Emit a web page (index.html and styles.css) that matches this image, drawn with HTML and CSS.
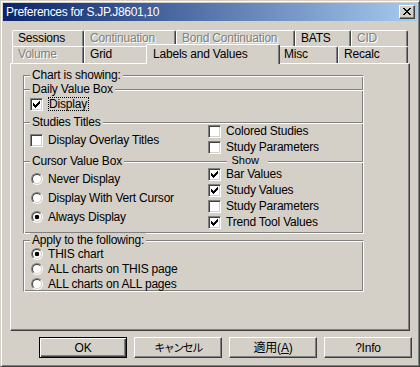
FILE: index.html
```html
<!DOCTYPE html>
<html>
<head>
    <title>Preferences for S.JP.J8601,10</title>
    <link rel="stylesheet" href="styles.css">
</head>
<body>
<div class="window">
    <div class="titlebar">
        <span class="title">Preferences for S.JP.J8601,10</span>
        <span class="close">
            <svg width="8" height="7" viewBox="0 0 8 7" shape-rendering="crispEdges"><path fill="#000" d="M0 0h2v1H0z M6 0h2v1H6z M1 1h2v1H1z M5 1h2v1H5z M2 2h4v1H2z M3 3h2v1H3z M2 4h4v1H2z M1 5h2v1H1z M5 5h2v1H5z M0 6h2v1H0z M6 6h2v1H6z"/></svg>
        </span>
    </div>

    <div class="tabs">
        <div class="tabrow back">
            <div class="tab t-sessions">Sessions</div>
            <div class="tab t-cont off">Continuation</div>
            <div class="tab t-bond off">Bond Continuation</div>
            <div class="tab t-bats">BATS</div>
            <div class="tab t-cid off">CID</div>
        </div>
        <div class="tabrow front">
            <div class="tab t-volume off">Volume</div>
            <div class="tab t-grid">Grid</div>
            <div class="tab t-labels current">Labels and Values</div>
            <div class="tab t-misc">Misc</div>
            <div class="tab t-recalc">Recalc</div>
        </div>
    </div>

    <div class="panel">
        <div class="group chart">
            <div class="group-title">Chart is showing:</div>

            <div class="hdr hdr-daily">
                <span class="line tick"></span><span class="hdr-label">Daily Value Box</span><span class="line grow"></span>
            </div>
            <div class="opt opt-display">
                <span class="cb"><svg width="7" height="7" viewBox="0 0 7 7" shape-rendering="crispEdges"><path fill="#000" d="M0 2h1v3H0z M1 3h1v3H1z M2 4h1v3H2z M3 3h1v3H3z M4 2h1v3H4z M5 1h1v3H5z M6 0h1v3H6z"/></svg></span>
                <span class="txt focus">Display</span>
            </div>

            <div class="hdr hdr-studies">
                <span class="line tick"></span><span class="hdr-label">Studies Titles</span><span class="line grow"></span>
            </div>
            <div class="cols studies">
                <div class="col left">
                    <div class="opt"><span class="cb"></span><span class="txt">Display Overlay Titles</span></div>
                </div>
                <div class="col right">
                    <div class="opt"><span class="cb"></span><span class="txt">Colored Studies</span></div>
                    <div class="opt"><span class="cb"></span><span class="txt">Study Parameters</span></div>
                </div>
            </div>

            <div class="hdr hdr-cursor">
                <span class="line tick"></span><span class="hdr-label">Cursor Value Box</span><span class="line grow"></span><span class="hdr-label show">Show</span><span class="line show-line"></span>
            </div>
            <div class="cols cursor">
                <div class="col left radios">
                    <div class="opt"><span class="rb"></span><span class="txt">Never Display</span></div>
                    <div class="opt"><span class="rb"></span><span class="txt">Display With Vert Cursor</span></div>
                    <div class="opt"><span class="rb on"></span><span class="txt">Always Display</span></div>
                </div>
                <div class="col right">
                    <div class="opt"><span class="cb"><svg width="7" height="7" viewBox="0 0 7 7" shape-rendering="crispEdges"><path fill="#000" d="M0 2h1v3H0z M1 3h1v3H1z M2 4h1v3H2z M3 3h1v3H3z M4 2h1v3H4z M5 1h1v3H5z M6 0h1v3H6z"/></svg></span><span class="txt">Bar Values</span></div>
                    <div class="opt"><span class="cb"><svg width="7" height="7" viewBox="0 0 7 7" shape-rendering="crispEdges"><path fill="#000" d="M0 2h1v3H0z M1 3h1v3H1z M2 4h1v3H2z M3 3h1v3H3z M4 2h1v3H4z M5 1h1v3H5z M6 0h1v3H6z"/></svg></span><span class="txt">Study Values</span></div>
                    <div class="opt"><span class="cb"></span><span class="txt">Study Parameters</span></div>
                    <div class="opt"><span class="cb"><svg width="7" height="7" viewBox="0 0 7 7" shape-rendering="crispEdges"><path fill="#000" d="M0 2h1v3H0z M1 3h1v3H1z M2 4h1v3H2z M3 3h1v3H3z M4 2h1v3H4z M5 1h1v3H5z M6 0h1v3H6z"/></svg></span><span class="txt">Trend Tool Values</span></div>
                </div>
            </div>
        </div>

        <div class="group apply">
            <div class="group-title">Apply to the following:</div>
            <div class="radios apply-list">
                <div class="opt"><span class="rb on"></span><span class="txt">THIS chart</span></div>
                <div class="opt"><span class="rb"></span><span class="txt">ALL charts on THIS page</span></div>
                <div class="opt"><span class="rb"></span><span class="txt">ALL charts on ALL pages</span></div>
            </div>
        </div>
    </div>

    <div class="buttons">
        <div class="btn default">OK</div>
        <div class="btn"><span class="jp">キャンセル</span></div>
        <div class="btn">適用(<u>A</u>)</div>
        <div class="btn">?Info</div>
    </div>
</div>
</body>
</html>
```

FILE: styles.css
```css
body {
    margin: 0;
    background: #d4d0c8;
    font-family: "Liberation Sans", "Noto Sans CJK JP", sans-serif;
    font-size: 12px;
    letter-spacing: -0.2px;
    color: #000;
}

.window {
    width: 420px;
    height: 367px;
    box-sizing: border-box;
    border: 1px solid;
    border-color: #d4d0c8 #404040 #404040 #d4d0c8;
    box-shadow: inset 1px 1px #fff, inset -1px -1px #808080;
    padding: 2px;
}

/* title bar */
.titlebar {
    height: 18px;
    display: flex;
    align-items: center;
    justify-content: space-between;
    padding: 0 2px 0 3px;
    background: linear-gradient(to right, #0a246a, #a6caf0);
    color: #fff;
    font-size: 12px;
    letter-spacing: -0.3px;
}
.close {
    width: 16px;
    height: 14px;
    box-sizing: border-box;
    background: #d4d0c8;
    border: 1px solid;
    border-color: #fff #404040 #404040 #fff;
    box-shadow: inset -1px -1px #808080;
    padding: 2px 0 0 3px;
}
.close svg { display: block; }

/* tabs */
.tabs { margin: 9px 0 0 9px; }
.tabrow { display: flex; }
.tabrow.back { height: 16px; }
.tabrow.front { height: 17px; }
.tab {
    flex: none;
    height: 100%;
    box-sizing: border-box;
    border-top: 1px solid #fff;
    border-left: 1px solid #fff;
    border-right: 1px solid #404040;
    box-shadow: inset -1px 0 #808080;
    border-radius: 2px 2px 0 0;
    padding-left: 5px;
    line-height: 14px;
    white-space: nowrap;
}
.t-sessions, .t-volume { width: 72px; }
.t-cont { width: 92px; }
.t-bond { width: 119px; }
.t-bats { width: 56px; }
.t-cid { width: 57px; }
.t-grid { width: 64px; }
.t-labels { width: 134px; }
.t-misc { width: 60px; }
.t-recalc { width: 70px; }
.tab.current {
    position: relative;
    z-index: 1;
    height: 20px;
    margin: -2px -2px 0;
    padding: 2px 0 0 6px;
    background: #d4d0c8;
}
.off {
    color: #808080;
    text-shadow: 1px 1px #fff;
}

/* tab page */
.panel {
    width: 400px;
    height: 268px;
    box-sizing: border-box;
    margin-left: 7px;
    border: 1px solid;
    border-color: #fff #404040 #404040 #fff;
    box-shadow: inset -1px -1px #808080;
    padding: 11px 0 0 12px;
}

.group {
    width: 341px;
    box-sizing: border-box;
    border: 1px solid;
    border-color: #808080 #fff #fff #808080;
    box-shadow: inset 1px 1px #fff, inset -1px -1px #808080;
    padding-left: 6px;
}
.chart { height: 159px; }
.apply { height: 52px; margin-top: 6px; }

.group-title {
    width: fit-content;
    margin-top: -8px;
    padding: 0 2px;
    line-height: 14px;
    background: #d4d0c8;
}

.hdr {
    display: flex;
    align-items: flex-start;
    height: 7px;
    margin-left: -6px;
}
.hdr .line {
    height: 0;
    margin-top: 4px;
    border-top: 1px solid #808080;
    border-bottom: 1px solid #fff;
}
.hdr .tick { width: 6px; }
.hdr .grow { flex: 1; }
.hdr .show-line { width: 95px; }
.hdr-label {
    line-height: 10px;
    margin-top: -1px;
    padding: 0 2px;
}
.hdr-label.show {
    margin-top: -2px;
    padding: 0 9px 0 4px;
    font-size: 11px;
    letter-spacing: 0;
}

.hdr-daily { margin-top: 3px; }
.opt-display { margin-top: 5px; }
.hdr-studies { margin-top: 7px; }
.hdr-cursor { margin-top: 2px; }

.cols { display: flex; }
.col.left { width: 178px; }
.col.right { display: flex; flex-direction: column; gap: 2px; }
.studies .col.left { padding-top: 8px; }
.studies .col.right { margin: -1px 0 1px; }
.cursor .col.right { padding-top: 3px; }
.cursor .col.left { padding-top: 8px; display: flex; flex-direction: column; gap: 5px; }
.apply-list { display: flex; flex-direction: column; gap: 1px; }

/* check boxes and radio buttons */
.opt {
    display: flex;
    align-items: flex-start;
    height: 14px;
    line-height: 14px;
    white-space: nowrap;
}
.txt { margin-left: 5px; }
.cb {
    width: 13px;
    height: 13px;
    margin-top: 1px;
    box-sizing: border-box;
    border: 1px solid;
    border-color: #808080 #fff #fff #808080;
    box-shadow: inset 1px 1px #404040, inset -1px -1px #d4d0c8;
    background: #fff;
    padding: 2px 0 0 2px;
}
.cb svg { display: block; }
.rb {
    width: 12px;
    height: 12px;
    margin: 1px 0 0 1px;
    box-sizing: border-box;
    border-radius: 50%;
    border: 1px solid;
    border-color: #808080 #fff #fff #808080;
}
.rb::before {
    content: "";
    display: block;
    width: 10px;
    height: 10px;
    box-sizing: border-box;
    border-radius: 50%;
    border: 1px solid;
    border-color: #404040 #d4d0c8 #d4d0c8 #404040;
    background: #fff;
}
.rb.on::before {
    background: radial-gradient(circle, #000 0 2px, #fff 2.6px);
}
.focus {
    height: 14px;
    box-sizing: border-box;
    border: 1px dotted #000;
    padding-right: 1px;
    line-height: 12px;
}

/* buttons */
.buttons {
    display: flex;
    gap: 7px;
    margin-top: 6px;
    padding-left: 36px;
}
.btn {
    width: 88px;
    height: 21px;
    box-sizing: border-box;
    border: 1px solid;
    border-color: #fff #404040 #404040 #fff;
    box-shadow: inset -1px -1px #808080;
    display: flex;
    align-items: center;
    justify-content: center;
    line-height: 14px;
}
.btn.default {
    border-color: #000;
    box-shadow: inset 1px 1px #fff, inset -1px -1px #404040, inset -2px -2px #808080;
}
.jp {
    font-size: 11px;
    letter-spacing: -1.5px;
}
```
